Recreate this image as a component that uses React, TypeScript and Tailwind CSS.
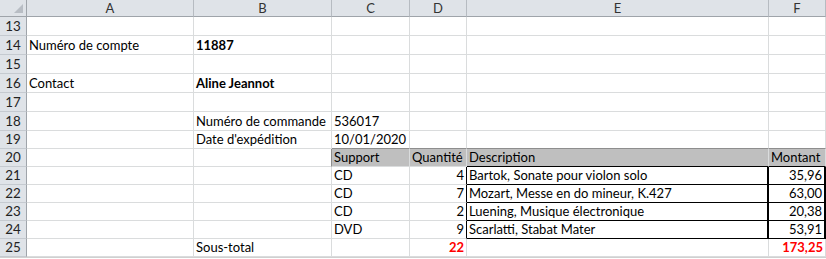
import React from "react";

type Cell = {
  t?: string;
  right?: boolean;
  bold?: boolean;
  red?: boolean;
  cls?: string;
};

const GRID = "border-r border-b border-[#dadcdd]";
const HEAD_BG = "bg-[#bfbfbf] border-r border-b border-[#8e8e8e]";

// rows 13..25, columns A..F
const rows: { n: number; cells: Cell[] }[] = [
  { n: 13, cells: [{}, {}, {}, {}, {}, {}] },
  { n: 14, cells: [{ t: "Numéro de compte" }, { t: "11887", bold: true }, {}, {}, {}, {}] },
  { n: 15, cells: [{}, {}, {}, {}, {}, {}] },
  { n: 16, cells: [{ t: "Contact" }, { t: "Aline Jeannot", bold: true }, {}, {}, {}, {}] },
  { n: 17, cells: [{}, {}, {}, {}, {}, {}] },
  { n: 18, cells: [{}, { t: "Numéro de commande" }, { t: "536017" }, {}, {}, {}] },
  {
    n: 19,
    cells: [{}, { t: "Date d'expédition" }, { t: "10/01/2020", cls: "border-b-[#8e8e8e]" }, { cls: "border-b-[#8e8e8e]" }, { cls: "border-b-[#8e8e8e]" }, { cls: "border-b-[#8e8e8e]" }],
  },
  {
    n: 20,
    cells: [
      {},
      { cls: "border-r-[#8e8e8e]" },
      { t: "Support", cls: HEAD_BG },
      { t: "Quantité", cls: HEAD_BG },
      { t: "Description", cls: HEAD_BG + " border-b-black" },
      { t: "Montant", cls: HEAD_BG + " border-b-black" },
    ],
  },
  ...[
    ["21", "CD", "4", "Bartok, Sonate pour violon solo", "35,96"],
    ["22", "CD", "7", "Mozart, Messe en do mineur, K.427", "63,00"],
    ["23", "CD", "2", "Luening, Musique électronique", "20,38"],
    ["24", "DVD", "9", "Scarlatti, Stabat Mater", "53,91"],
  ].map(([n, s, q, d, m]) => ({
    n: Number(n),
    cells: [
      {},
      {},
      { t: s },
      { t: q, right: true, cls: "border-r-black" },
      { t: d, cls: "border-r-2 border-r-black border-b-black" },
      { t: m, right: true, cls: "border-r-2 border-r-black border-b-black" },
    ] as Cell[],
  })),
  {
    n: 25,
    cells: [{}, { t: "Sous-total" }, {}, { t: "22", right: true, bold: true, red: true }, {}, { t: "173,25", right: true, bold: true, red: true }],
  },
];

const letters = ["A", "B", "C", "D", "E", "F"];

export default function App() {
  return (
    <div
      className="w-[826px] h-[259px] overflow-hidden bg-white text-black"
      style={{ fontFamily: "Lato, 'Liberation Sans', sans-serif" }}
    >
      <div className="grid grid-cols-[27px_167px_138px_78px_57px_302px_57px] grid-rows-[17px_repeat(6,19px)_repeat(7,18px)] text-[13px] leading-none">
        {/* corner with select-all triangle */}
        <div className="relative bg-[#dfe3e8] border-r border-b border-[#9fa4aa]">
          <svg className="absolute right-[3px] bottom-[3px]" width="9" height="9" viewBox="0 0 9 9">
            <polygon points="9,0 9,9 0,9" fill="#b8bdc4" />
          </svg>
        </div>
        {letters.map((l) => (
          <div
            key={l}
            className="flex items-end justify-center pb-[1px] bg-[#dfe3e8] border-r border-b border-r-[#b6bbc1] border-b-[#9fa4aa] text-[#333] text-[13px]"
          >
            {l}
          </div>
        ))}
        {rows.map((r) => (
          <React.Fragment key={r.n}>
            <div className="flex items-end justify-center pb-[2px] bg-[#dfe3e8] border-r border-b border-r-[#9fa4aa] border-b-[#c5cad0] text-[#222] text-[13.4px]">
              {r.n}
            </div>
            {r.cells.map((c, i) => (
              <div
                key={i}
                className={`flex items-end pb-[2px] pl-[2px] pr-[2px] whitespace-nowrap overflow-visible ${
                  c.right ? "justify-end" : "justify-start"
                } ${c.bold ? "font-bold" : ""} ${c.red ? "text-[#ff0000]" : ""} ${GRID} ${c.cls ?? ""}`}
              >
                {c.t}
              </div>
            ))}
          </React.Fragment>
        ))}
      </div>
      <div className="h-[2px] border-t border-[#d0d0d0] bg-white" />
    </div>
  );
}
